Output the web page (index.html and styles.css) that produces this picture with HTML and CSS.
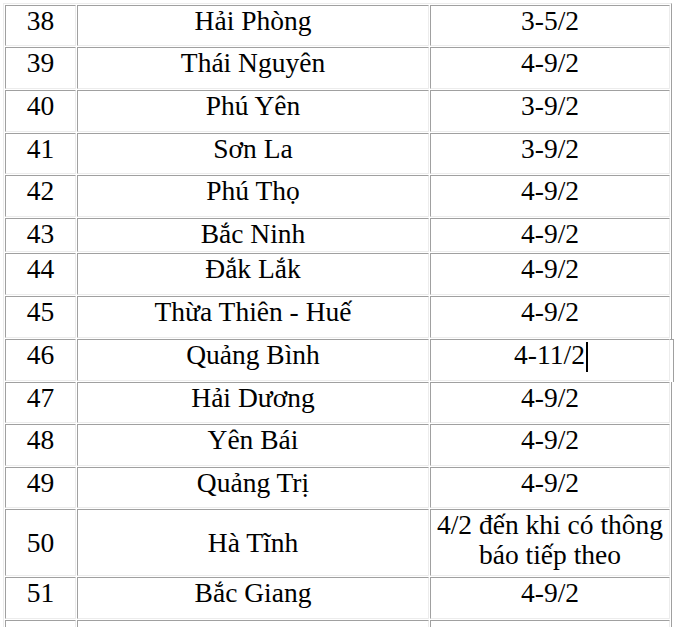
FILE: index.html
```html
<!DOCTYPE html>
<html>
<head>
<meta charset="utf-8">
<title>Lịch nghỉ</title>
<link rel="stylesheet" href="styles.css">
</head>
<body>
<table class="sheet">
  <tbody>
    <tr class="h41 row"><td class="c-no">38</td><td class="c-name">Hải Phòng</td><td class="c-date">3-5/2</td></tr>
    <tr class="h42 row"><td class="c-no">39</td><td class="c-name">Thái Nguyên</td><td class="c-date">4-9/2</td></tr>
    <tr class="h42 row"><td class="c-no">40</td><td class="c-name">Phú Yên</td><td class="c-date">3-9/2</td></tr>
    <tr class="h41 row"><td class="c-no">41</td><td class="c-name">Sơn La</td><td class="c-date">3-9/2</td></tr>
    <tr class="h42 row"><td class="c-no">42</td><td class="c-name">Phú Thọ</td><td class="c-date">4-9/2</td></tr>
    <tr class="h34 row"><td class="c-no">43</td><td class="c-name">Bắc Ninh</td><td class="c-date">4-9/2</td></tr>
    <tr class="h42 row"><td class="c-no">44</td><td class="c-name">Đắk Lắk</td><td class="c-date">4-9/2</td></tr>
    <tr class="h42 row"><td class="c-no">45</td><td class="c-name">Thừa Thiên - Huế</td><td class="c-date">4-9/2</td></tr>
    <tr class="h42 row"><td class="c-no">46</td><td class="c-name">Quảng Bình</td><td class="c-date editing">4-11/2<span class="caret"></span></td></tr>
    <tr class="h41 row"><td class="c-no">47</td><td class="c-name">Hải Dương</td><td class="c-date">4-9/2</td></tr>
    <tr class="h42 row"><td class="c-no">48</td><td class="c-name">Yên Bái</td><td class="c-date">4-9/2</td></tr>
    <tr class="h41 row"><td class="c-no">49</td><td class="c-name">Quảng Trị</td><td class="c-date">4-9/2</td></tr>
    <tr class="h67 row"><td class="c-no mid">50</td><td class="c-name mid">Hà Tĩnh</td><td class="c-date">4/2 đến khi có thông báo tiếp theo</td></tr>
    <tr class="h42 row"><td class="c-no">51</td><td class="c-name">Bắc Giang</td><td class="c-date">4-9/2</td></tr>
    <tr class="h42 row"><td class="c-no"></td><td class="c-name"></td><td class="c-date"></td></tr>
  </tbody>
</table>
</body>
</html>
```

FILE: styles.css
```css
html, body {
  margin: 0;
  padding: 0;
  background: #ffffff;
}

body {
  padding: 3px 0 0 3px;
  color: #000000;
}

.sheet {
  table-layout: fixed;
  width: 669px;
  border-collapse: separate;
  border-spacing: 1px;
  border: 1px solid;
  border-color: #ececec #a0a0a0 #a0a0a0 #ececec;
  background: #ffffff;
}

.sheet td {
  box-sizing: border-box;
  border: 1px solid;
  border-color: #a0a0a0 #ececec #ececec #a0a0a0;
  padding: 0 1px;
  font-size: 27.5px;
  line-height: 30px;
  text-align: center;
  vertical-align: top;
}

.row td { font-family: "Liberation Serif", monospace; }

.sheet td.mid {
  vertical-align: middle;
}

.c-no { width: 71px; }
.c-name { width: 352px; }
.c-date { width: 240px; }

.h34 td { height: 34px; }
.h41 td { height: 41px; }
.h42 td { height: 42px; }
.h67 td { height: 67px; }

.editing {
  position: relative;
}

.editing::after {
  content: "";
  position: absolute;
  top: -1px;
  bottom: -2px;
  right: -5px;
  width: 3px;
  background: #ffffff;
  border-top: 1px solid #a0a0a0;
  border-right: 1px solid #a0a0a0;
}

.caret {
  display: inline-block;
  width: 0;
  height: 30px;
  border-left: 2px solid #000000;
  margin-right: -2px;
  margin-left: 1px;
  vertical-align: -8px;
}
```
